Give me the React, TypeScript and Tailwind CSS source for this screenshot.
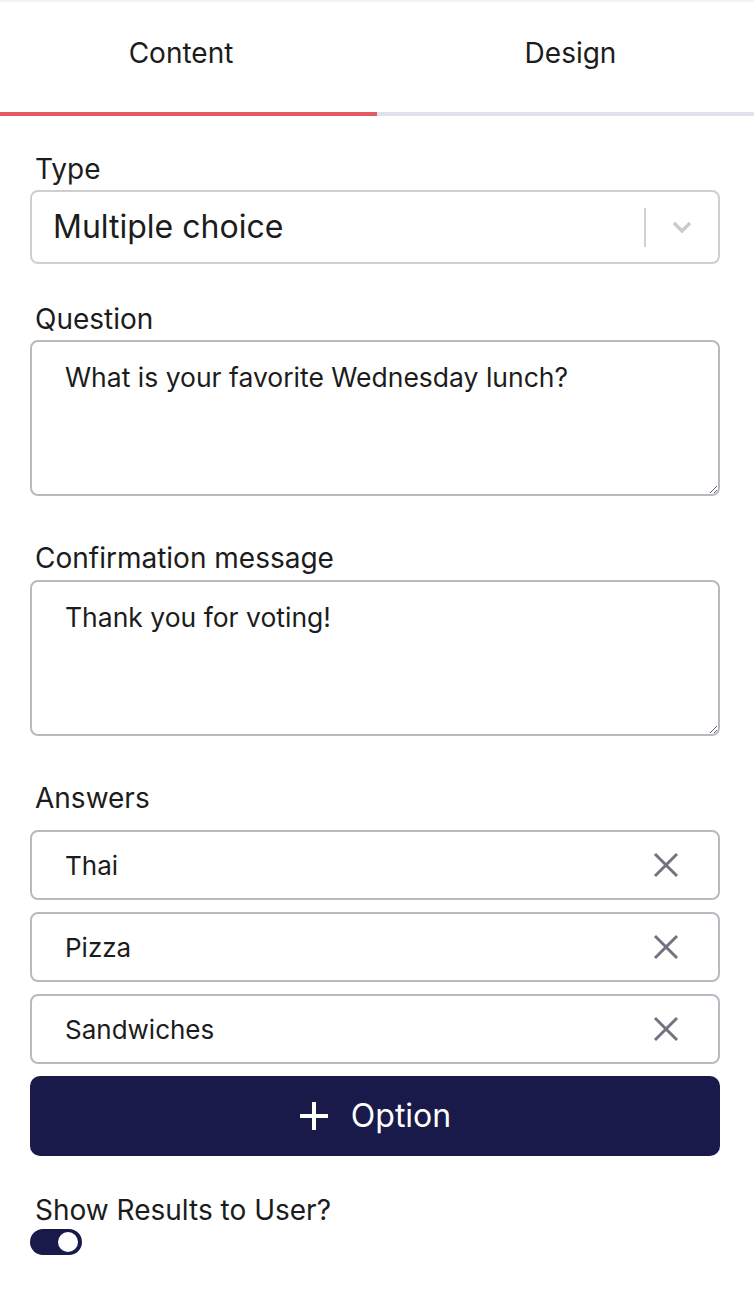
import React from "react";

const XIcon = () => (
  <svg width="28" height="28" viewBox="0 0 28 28" fill="none" stroke="#727280" strokeWidth="3" strokeLinecap="butt">
    <path d="M3 3 L25 25 M25 3 L3 25" />
  </svg>
);

function AnswerRow({ text }: { text: string }) {
  return (
    <div className="flex h-[70px] items-center justify-between rounded-[8px] border-2 border-[#b9b9c1] pl-[33px] pr-[38px]">
      <span className="text-[26px] text-[#1c1c1c]">{text}</span>
      <XIcon />
    </div>
  );
}

export default function App() {
  return (
    <div className="min-h-[1290px] w-[754px] bg-white font-['Inter',sans-serif] text-[#1c1c1c]">
      <div className="h-[2px] bg-[#f3f3f5]" />
      <div className="grid grid-cols-2">
        <div className="flex h-[114px] items-center justify-center border-b-4 border-[#e55a60] pb-[8px] pr-[15px] text-[28px]">
          Content
        </div>
        <div className="flex h-[114px] items-center justify-center border-b-4 border-[#e2e0ec] pb-[8px] pl-[10px] text-[28px]">
          Design
        </div>
      </div>
      <div className="pl-[30px] pr-[34px] pt-[37px]">
        <div className="mb-[5px] pl-[5px] text-[28px] leading-[32px]">Type</div>
        <div className="flex h-[74px] items-center rounded-[8px] border-2 border-[#cfcfd2] pl-[21px]">
          <span className="flex-1 text-[32px]">Multiple choice</span>
          <div className="h-[39px] w-[2px] bg-[#d0d0d0]" />
          <div className="flex w-[72px] items-center justify-center">
            <svg width="20" height="12" viewBox="0 0 20 12" fill="none" stroke="#cbcbcb" strokeWidth="3.5">
              <path d="M2 2 L10 10 L18 2" />
            </svg>
          </div>
        </div>

        <div className="mb-[5px] mt-[39px] pl-[5px] text-[28px] leading-[32px]">Question</div>
        <textarea
          readOnly
          defaultValue="What is your favorite Wednesday lunch?"
          className="block h-[156px] w-full rounded-[8px] border-2 border-[#b9b9c1] px-[33px] pt-[19px] font-['Inter',sans-serif] text-[26.5px] leading-[32px] text-[#1c1c1c] outline-none"
        />

        <div className="mb-[6px] mt-[46px] pl-[5px] text-[28px] leading-[32px]">Confirmation message</div>
        <textarea
          readOnly
          defaultValue="Thank you for voting!"
          className="block h-[156px] w-full rounded-[8px] border-2 border-[#b9b9c1] px-[33px] pt-[19px] font-['Inter',sans-serif] text-[26.5px] leading-[32px] text-[#1c1c1c] outline-none"
        />

        <div className="mb-[16px] mt-[46px] pl-[5px] text-[28px] leading-[32px]">Answers</div>
        <div className="flex flex-col gap-[12px]">
          <AnswerRow text="Thai" />
          <AnswerRow text="Pizza" />
          <AnswerRow text="Sandwiches" />
        </div>
        <button className="mt-[12px] flex h-[80px] w-full items-center justify-center gap-[22px] rounded-[10px] bg-[#191a4a] text-[32px] text-white">
          <svg width="30" height="30" viewBox="0 0 30 30" fill="none" stroke="white" strokeWidth="4">
            <path d="M15 1 V29 M1 15 H29" />
          </svg>
          <span>Option</span>
        </button>

        <div className="mb-[3px] mt-[38px] pl-[5px] text-[28px] leading-[32px]">Show Results to User?</div>
        <div className="flex h-[26px] w-[52px] items-center justify-end rounded-full bg-[#191a4a] pr-[4px]">
          <div className="h-[20px] w-[20px] rounded-full bg-white" />
        </div>
      </div>
    </div>
  );
}
